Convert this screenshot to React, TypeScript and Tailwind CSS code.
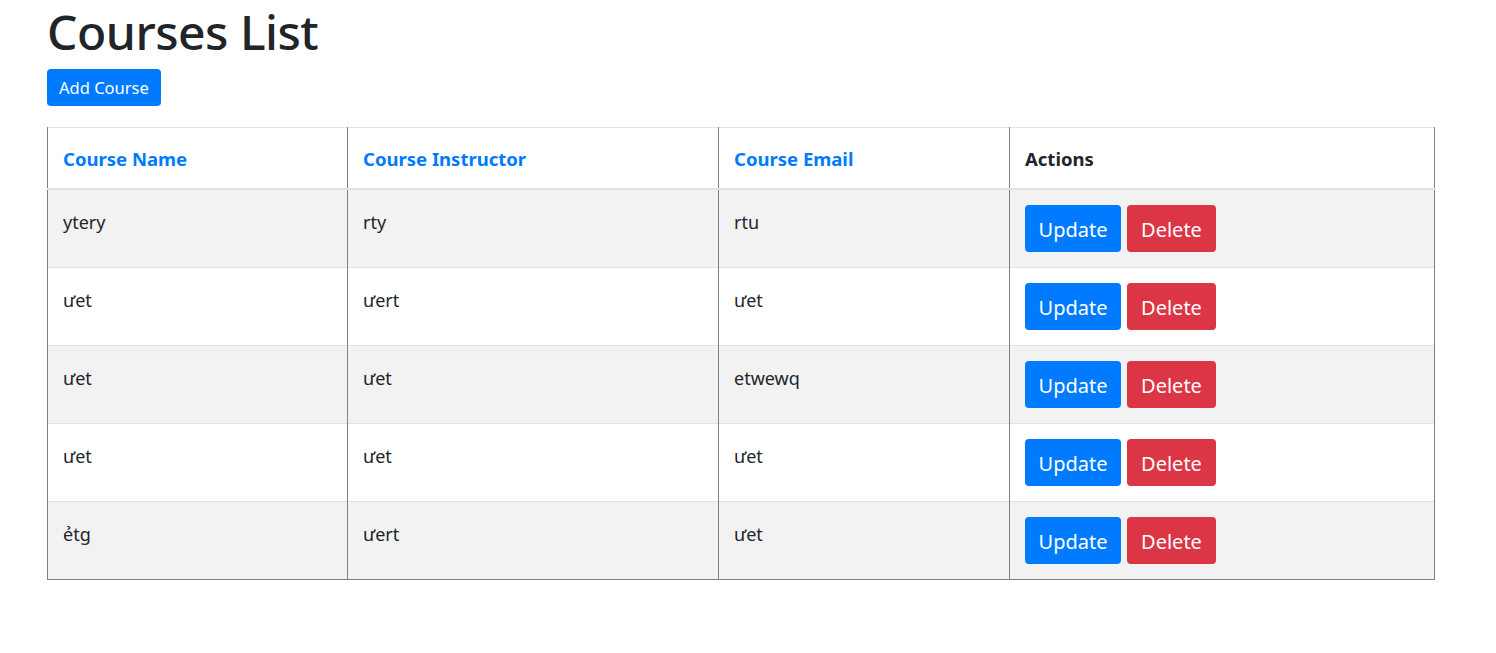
import React from 'react';

type Course = { name: string; instructor: string; email: string };

const COURSES: Course[] = [
  { name: 'ytery', instructor: 'rty', email: 'rtu' },
  { name: 'ưet', instructor: 'ưert', email: 'ưet' },
  { name: 'ưet', instructor: 'ưet', email: 'etwewq' },
  { name: 'ưet', instructor: 'ưet', email: 'ưet' },
  { name: 'ẻtg', instructor: 'ưert', email: 'ưet' },
];

const App: React.FC = () => {
  return (
    <div className="min-h-screen bg-white pl-[47px] pr-[61px] text-[#212529] font-['Noto_Sans','Open_Sans',sans-serif]">
      {/* Title */}
      <h1 className="pt-[3px] text-[48px] leading-[57px] font-medium tracking-[-0.5px]">Courses List</h1>
      <button className="mt-[9px] h-[37px] rounded-[4px] bg-[#007bff] px-[12px] pt-[1px] text-[16.5px] leading-[24px] text-white">
        Add Course
      </button>

      {/* Table */}
      <table className="mt-[21px] w-[1387px] table-fixed border-collapse text-[18px] leading-[27px]">
        <colgroup>
          <col className="w-[300px]" />
          <col className="w-[371px]" />
          <col className="w-[291px]" />
          <col className="w-[425px]" />
        </colgroup>
        <thead>
          <tr className="border-t border-t-[#dee2e6]">
            <th className="border-x border-x-[#808080] border-b-2 border-b-[#dee2e6] px-[15px] pt-[17px] pb-[16px] text-left text-[18.5px] font-bold text-[#007bff]">Course Name</th>
            <th className="border-x border-x-[#808080] border-b-2 border-b-[#dee2e6] px-[15px] pt-[17px] pb-[16px] text-left text-[18.5px] font-bold text-[#007bff]">Course Instructor</th>
            <th className="border-x border-x-[#808080] border-b-2 border-b-[#dee2e6] px-[15px] pt-[17px] pb-[16px] text-left text-[18.5px] font-bold text-[#007bff]">Course Email</th>
            <th className="border-x border-x-[#808080] border-b-2 border-b-[#dee2e6] px-[15px] pt-[17px] pb-[16px] text-left text-[18.5px] font-bold">Actions</th>
          </tr>
        </thead>
        <tbody>
          {COURSES.map((c, i) => (
            <tr
              key={i}
              className={`${i % 2 === 0 ? 'bg-[#f2f2f2]' : 'bg-white'} ${i === COURSES.length - 1 ? 'border-b border-b-[#808080]' : 'border-b border-b-[#dee2e6]'}`}
            >
              <td className="border-x border-x-[#808080] px-[15px] pt-[19px] pb-[11px] align-top">{c.name}</td>
              <td className="border-x border-x-[#808080] px-[15px] pt-[19px] pb-[11px] align-top">{c.instructor}</td>
              <td className="border-x border-x-[#808080] px-[15px] pt-[19px] pb-[11px] align-top">{c.email}</td>
              <td className="border-x border-x-[#808080] px-[15px] py-[15px] align-top">
                <div className="flex gap-[6px]">
                  <button className="h-[47px] w-[96px] rounded-[4px] bg-[#007bff] pt-[3px] text-[20px] leading-[30px] text-white">Update</button>
                  <button className="h-[47px] w-[89px] rounded-[4px] bg-[#dc3545] pt-[3px] text-[20px] leading-[30px] text-white">Delete</button>
                </div>
              </td>
            </tr>
          ))}
        </tbody>
      </table>
    </div>
  );
};

export default App;
